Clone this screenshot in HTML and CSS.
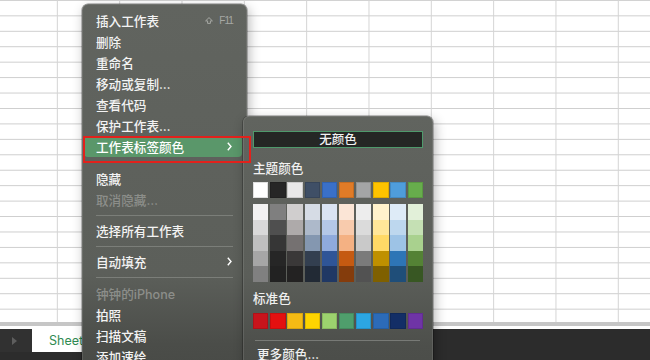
FILE: index.html
```html
<!DOCTYPE html>
<html lang="zh-CN">
<head>
<meta charset="utf-8">
<title>工作表标签颜色</title>
<link rel="stylesheet" href="styles.css">
</head>
<body>
<div class="app">
  <div class="sheet"></div>
  <div class="hbar"></div>
  <div class="hgap"></div>
  <div class="tabbar">
    <div class="tabnav"><span class="play"></span></div>
    <div class="tab">Sheet1</div>
  </div>

  <div class="menu main-menu">
    <div class="item"><span class="text">插入工作表</span><span class="shortcut"><svg class="shift" width="8" height="7" viewBox="0 0 8 7"><path d="M4 0.6 L7.4 3.9 H5.4 V6.4 H2.6 V3.9 H0.6 Z" fill="none" stroke="#a6a8a4" stroke-width="1"/></svg>F11</span></div>
    <div class="item"><span class="text">删除</span></div>
    <div class="item"><span class="text">重命名</span></div>
    <div class="item"><span class="text">移动或复制…</span></div>
    <div class="item"><span class="text">查看代码</span></div>
    <div class="item"><span class="text">保护工作表…</span></div>
    <div class="item active"><span class="text">工作表标签颜色</span><svg class="chev" width="5" height="9" viewBox="0 0 5 9"><path d="M0.8 0.8 L4 4.5 L0.8 8.2" fill="none" stroke="#ffffff" stroke-width="1.4"/></svg></div>
    <div class="sep sep-wide"></div>
    <div class="item"><span class="text">隐藏</span></div>
    <div class="item disabled"><span class="text">取消隐藏…</span></div>
    <div class="sep"></div>
    <div class="item"><span class="text">选择所有工作表</span></div>
    <div class="sep"></div>
    <div class="item"><span class="text">自动填充</span><svg class="chev" width="5" height="9" viewBox="0 0 5 9"><path d="M0.8 0.8 L4 4.5 L0.8 8.2" fill="none" stroke="#ffffff" stroke-width="1.4"/></svg></div>
    <div class="sep sep-wide"></div>
    <div class="item disabled"><span class="text">钟钟的iPhone</span></div>
    <div class="item"><span class="text">拍照</span></div>
    <div class="item"><span class="text">扫描文稿</span></div>
    <div class="item"><span class="text">添加速绘</span></div>
  </div>

  <div class="menu color-menu">
    <div class="nocolor">无颜色</div>
    <div class="group-label">主题颜色</div>
    <div class="swatch-row theme-row">
      <span class="sw" style="background:#ffffff"></span>
      <span class="sw" style="background:#262626"></span>
      <span class="sw" style="background:#e9e8e8"></span>
      <span class="sw" style="background:#3f4f66"></span>
      <span class="sw" style="background:#3a70c8"></span>
      <span class="sw" style="background:#e07b27"></span>
      <span class="sw" style="background:#a4a5a6"></span>
      <span class="sw" style="background:#fec300"></span>
      <span class="sw" style="background:#4f9ddb"></span>
      <span class="sw" style="background:#67ad4c"></span>
    </div>
    <div class="shades">
      <div class="shade-col"><span style="background:#f2f2f2"></span><span style="background:#d9d9d9"></span><span style="background:#bfbfbf"></span><span style="background:#a6a6a6"></span><span style="background:#808080"></span></div>
      <div class="shade-col"><span style="background:#7f7f7f"></span><span style="background:#4f4f4f"></span><span style="background:#363636"></span><span style="background:#262626"></span><span style="background:#222222"></span></div>
      <div class="shade-col"><span style="background:#d0cece"></span><span style="background:#aeaaaa"></span><span style="background:#757171"></span><span style="background:#3a3838"></span><span style="background:#232222"></span></div>
      <div class="shade-col"><span style="background:#d6dce5"></span><span style="background:#adb9ca"></span><span style="background:#8497b0"></span><span style="background:#333f50"></span><span style="background:#222a35"></span></div>
      <div class="shade-col"><span style="background:#dae3f3"></span><span style="background:#b4c7e7"></span><span style="background:#8faadc"></span><span style="background:#2f5597"></span><span style="background:#203864"></span></div>
      <div class="shade-col"><span style="background:#fbe5d6"></span><span style="background:#f8cbad"></span><span style="background:#f4b183"></span><span style="background:#c55a11"></span><span style="background:#843c0c"></span></div>
      <div class="shade-col"><span style="background:#ededed"></span><span style="background:#dbdbdb"></span><span style="background:#c9c9c9"></span><span style="background:#7b7b7b"></span><span style="background:#525252"></span></div>
      <div class="shade-col"><span style="background:#fff2cc"></span><span style="background:#ffe699"></span><span style="background:#ffd966"></span><span style="background:#bf9000"></span><span style="background:#7f6000"></span></div>
      <div class="shade-col"><span style="background:#deebf7"></span><span style="background:#bdd7ee"></span><span style="background:#9dc3e6"></span><span style="background:#2e75b6"></span><span style="background:#1f4e79"></span></div>
      <div class="shade-col"><span style="background:#e2f0d9"></span><span style="background:#c5e0b4"></span><span style="background:#a9d18e"></span><span style="background:#548235"></span><span style="background:#385723"></span></div>
    </div>
    <div class="group-label std-label">标准色</div>
    <div class="swatch-row std-row">
      <span class="sw" style="background:#c8141c"></span>
      <span class="sw" style="background:#e41010"></span>
      <span class="sw" style="background:#f5bb14"></span>
      <span class="sw" style="background:#fed400"></span>
      <span class="sw" style="background:#9cd26e"></span>
      <span class="sw" style="background:#4f9e6c"></span>
      <span class="sw" style="background:#2ca6e3"></span>
      <span class="sw" style="background:#2c6bb8"></span>
      <span class="sw" style="background:#132e66"></span>
      <span class="sw" style="background:#6f34a6"></span>
    </div>
    <div class="csep"></div>
    <div class="more">更多颜色…</div>
  </div>

  <div class="focus-box"></div>
</div>
</body>
</html>
```

FILE: styles.css
```css
html, body {
  margin: 0;
  padding: 0;
}
body {
  width: 650px;
  height: 360px;
  overflow: hidden;
  background: #ffffff;
  font-family: Inter, "Noto Sans CJK SC", sans-serif;
}
.app {
  position: relative;
  width: 650px;
  height: 360px;
  overflow: hidden;
  display: flex;
  flex-direction: column;
}

/* spreadsheet grid */
.sheet {
  height: 322px;
  flex: none;
  background-color: #ffffff;
  background-image:
    linear-gradient(to right, transparent 61.33px, #d4d4d4 61.33px),
    linear-gradient(to bottom, transparent 14.25px, #cdcdcd 14.25px);
  background-size: 62.33px 100%, 100% 15.45px;
  background-position: -4.5px 0, 0 0.9px;
}
.hbar {
  height: 4px;
  flex: none;
  background: #c6c6c6;
}
.hgap {
  height: 3px;
  flex: none;
  background: #ffffff;
}
.tabbar {
  flex: 1;
  background: #2c2c2c;
  display: flex;
  align-items: flex-start;
}
.tabnav {
  width: 32px;
  height: 23px;
  background: #313131;
  display: flex;
  align-items: center;
  padding-left: 12px;
  box-sizing: border-box;
}
.play {
  width: 0;
  height: 0;
  border-left: 5px solid #5e5e5e;
  border-top: 4px solid transparent;
  border-bottom: 4px solid transparent;
}
.tab {
  width: 80px;
  height: 23px;
  background: #ffffff;
  color: #2e8a52;
  font-size: 12.5px;
  line-height: 23px;
  padding-left: 17px;
  box-sizing: border-box;
}

/* menus */
.menu {
  position: absolute;
  border-radius: 6px;
  box-sizing: border-box;
  box-shadow: inset 0 0 0 1px rgba(255,255,255,0.10), 0 0 0 0.5px rgba(0,0,0,0.45), 2px 4px 12px rgba(0,0,0,0.30);
}
.main-menu {
  left: 82px;
  top: 4px;
  width: 165px;
  height: 380px;
  padding: 6px 5px 0 2px;
  background: linear-gradient(to bottom, #61645f 0px, #5c5f5a 270px, #4b4d49 340px, #474945 380px);
}
.item {
  height: 21px;
  display: flex;
  align-items: center;
  padding: 0 8px 0 12px;
  color: #f3f3f3;
  font-size: 12.6px;
  font-weight: 500;
  border-radius: 4px;
  white-space: nowrap;
}
.item .text {
  flex: 1;
}
.item.active {
  background: #5a976a;
  color: #ffffff;
}
.item.disabled {
  color: #8c8e8a;
}
.shortcut {
  display: flex;
  align-items: center;
  gap: 6px;
  color: #a6a8a4;
  font-size: 10px;
  letter-spacing: -0.9px;
  font-family: "Liberation Sans", sans-serif;
  margin-right: 1px;
}
.chev {
  margin-right: 2px;
}
.sep {
  height: 10px;
  display: flex;
  align-items: center;
  padding: 0 9px 0 12px;
}
.sep-wide {
  height: 11px;
}
.sep::after {
  content: "";
  flex: 1;
  height: 1px;
  background: #7b7e79;
}

/* colour submenu */
.color-menu {
  left: 243px;
  top: 116px;
  width: 190px;
  height: 270px;
  padding: 14.5px 10px 0 10px;
  background: linear-gradient(to bottom, #61645f 0px, #5b5e59 160px, #4d4f4b 230px, #4a4c48 270px);
}
.nocolor {
  height: 17px;
  box-sizing: border-box;
  border: 1px solid #4f9a6c;
  background: #252725;
  color: #f2f2f2;
  font-size: 12.5px;
  font-weight: 500;
  line-height: 15px;
  text-align: center;
}
.group-label {
  margin-top: 12px;
  height: 18px;
  line-height: 18px;
  font-size: 12.6px;
  font-weight: 500;
  color: #f0f0f0;
}
.swatch-row {
  display: grid;
  grid-template-columns: repeat(10, 1fr);
  column-gap: 1.7px;
}
.theme-row {
  margin-top: 4.7px;
  height: 15.6px;
}
.sw {
  display: block;
  box-shadow: inset 0 0 0 1px rgba(0,0,0,0.12);
}
.shades {
  margin-top: 6.7px;
  height: 77px;
  display: grid;
  grid-template-columns: repeat(10, 1fr);
  column-gap: 1.7px;
}
.shade-col {
  display: flex;
  flex-direction: column;
}
.shade-col span {
  flex: 1;
  display: block;
}
.std-label {
  margin-top: 8.3px;
}
.std-row {
  margin-top: 5px;
  height: 16px;
}
.csep {
  margin: 11.5px 3px 0 2px;
  height: 1px;
  background: #787a76;
}
.more {
  margin-top: 5px;
  padding-left: 4px;
  color: #f0f0f0;
  font-size: 12.6px;
  font-weight: 500;
  line-height: 18px;
}

/* annotation rectangle */
.focus-box {
  position: absolute;
  left: 83px;
  top: 136px;
  width: 168px;
  height: 27px;
  box-sizing: border-box;
  border: 2px solid #e2211c;
}
```
